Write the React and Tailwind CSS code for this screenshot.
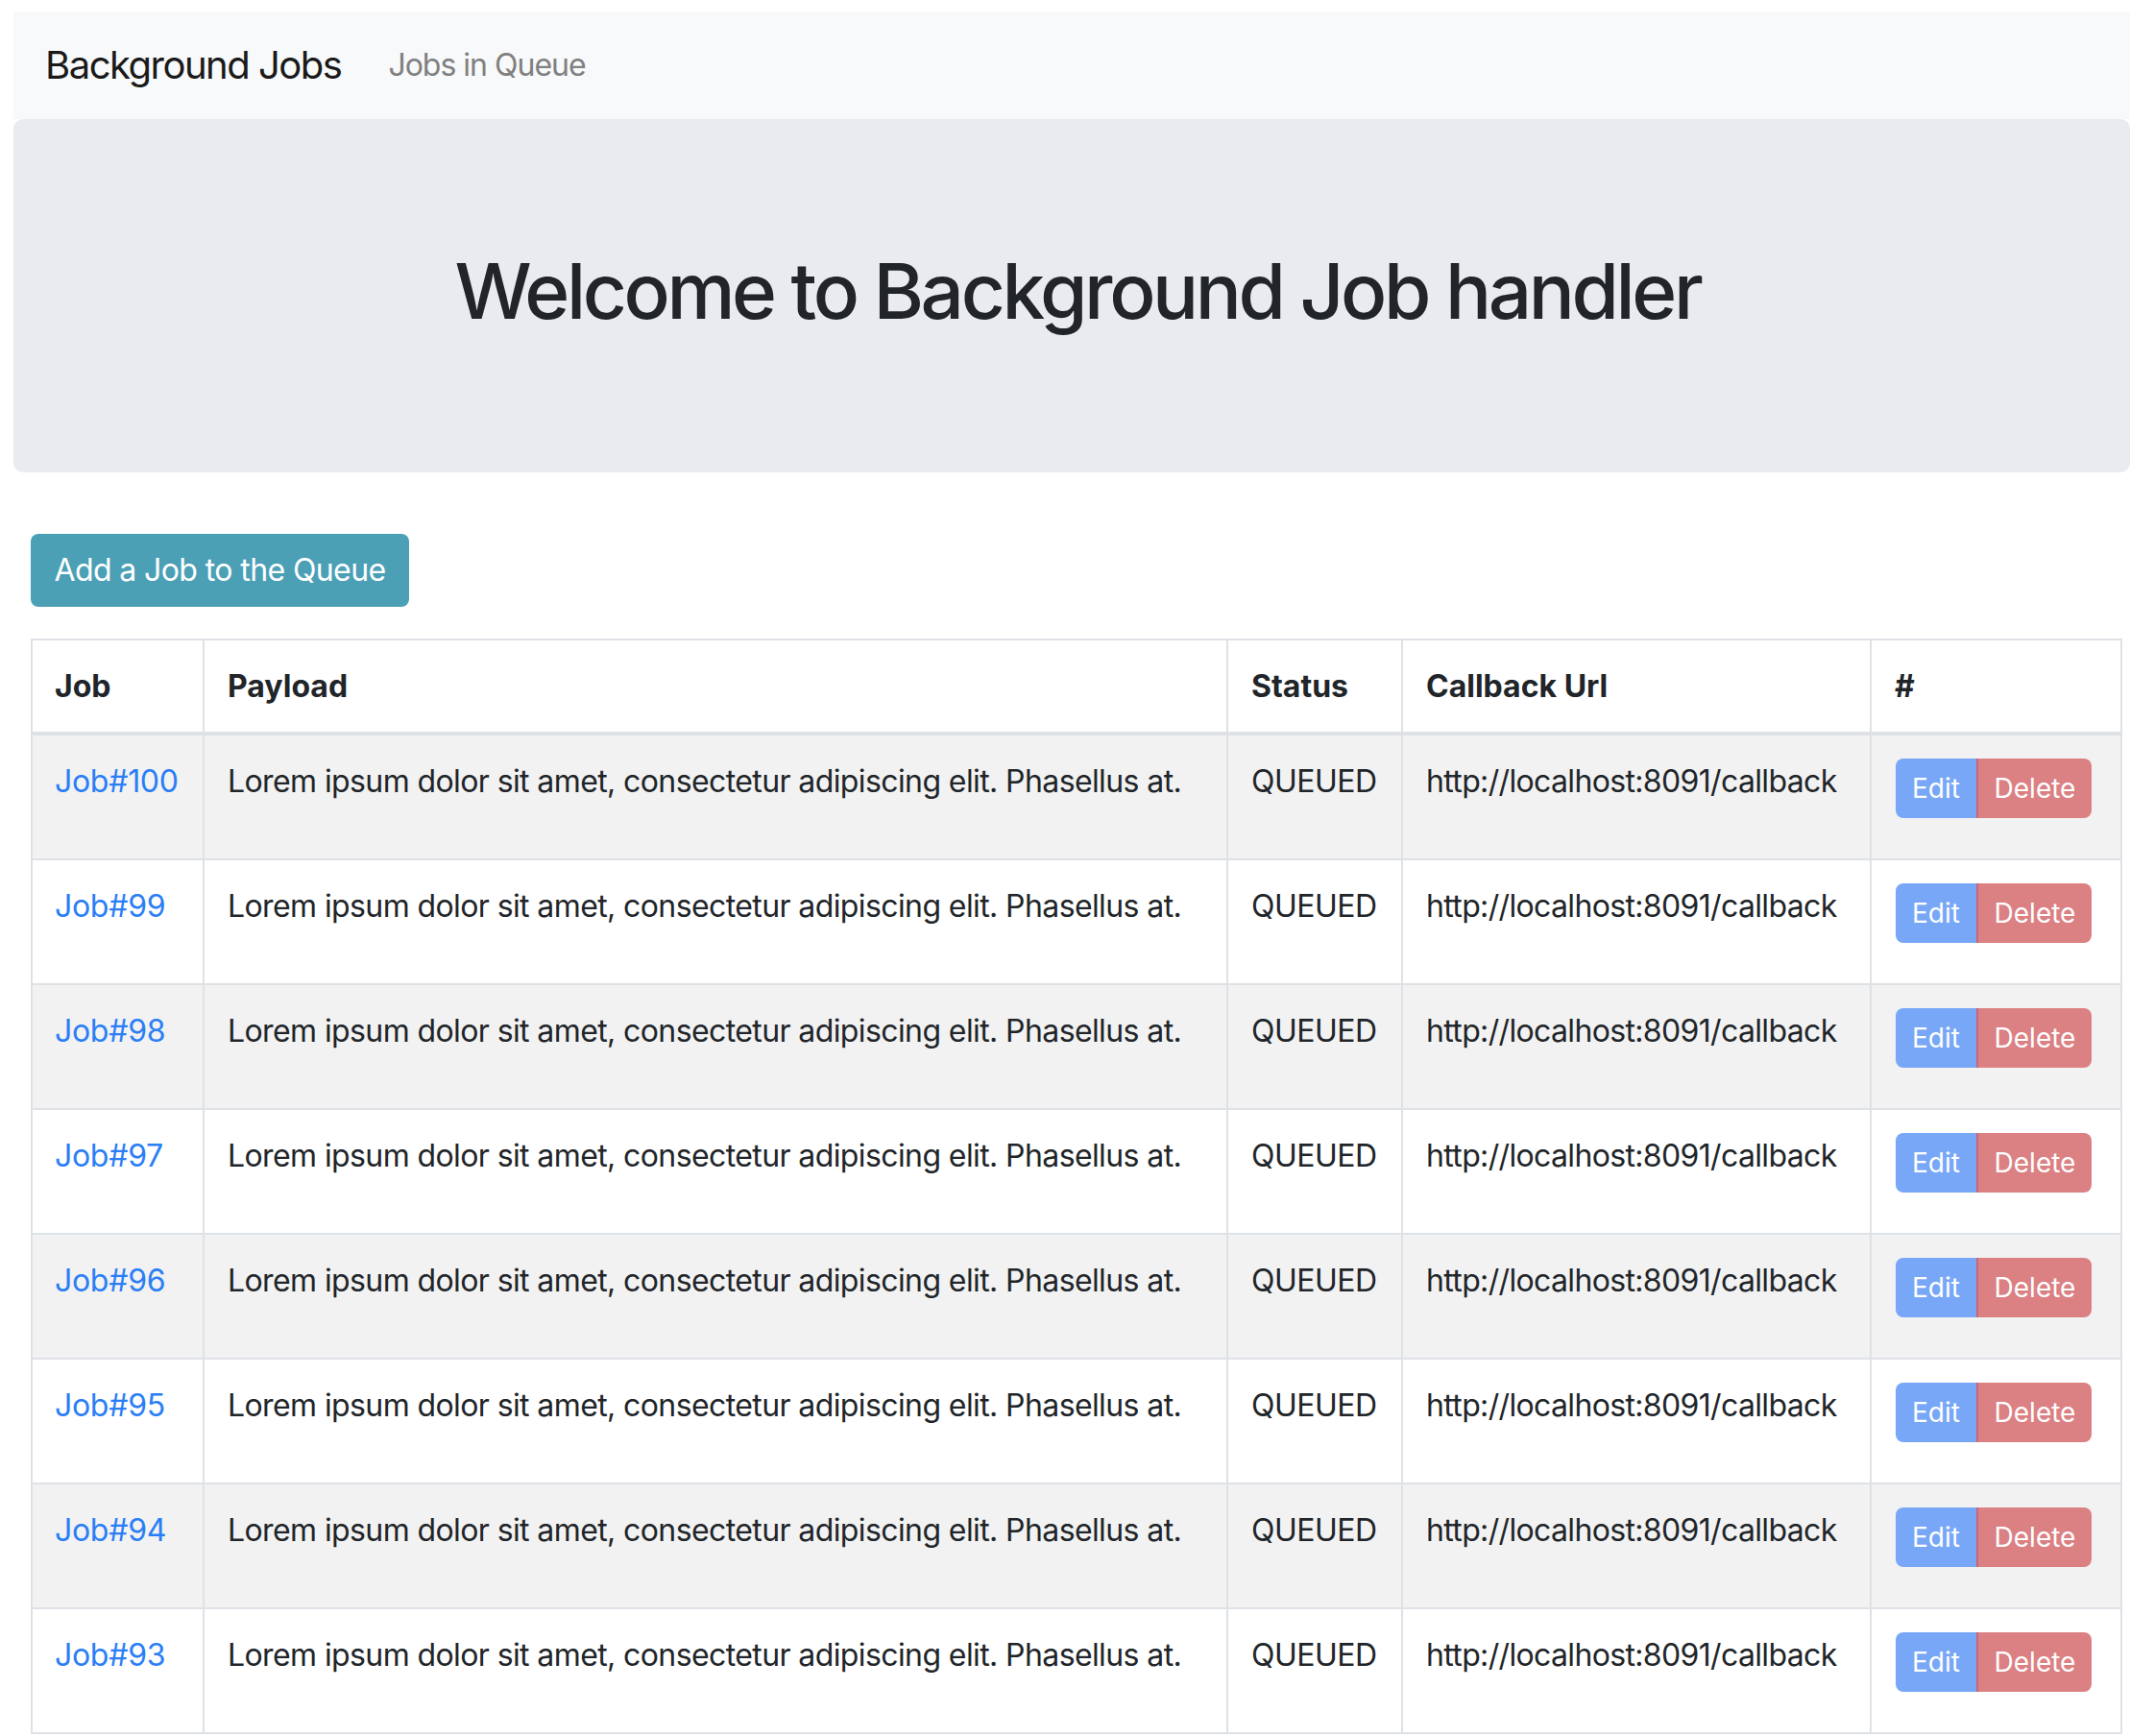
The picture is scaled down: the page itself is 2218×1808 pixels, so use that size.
import React from "react";

const FONT = { fontFamily: "Inter, 'Noto Sans', sans-serif" };

const rows = [100, 99, 98, 97, 96, 95, 94, 93];

function Row({ n, striped }) {
  return (
    <div className={`flex h-[130px] border-b-2 border-[#dee2e6] ${striped ? "bg-[#f2f2f2]" : "bg-white"}`}>
      <div className="w-[179px] shrink-0 border-r-2 border-[#dee2e6] pl-[23px] pt-[24px] text-[32px] leading-[48px] tracking-[-0.3px] text-[#2a7ef6]">
        Job#{n}
      </div>
      <div className="w-[1066px] shrink-0 border-r-2 border-[#dee2e6] pl-[24px] pt-[24px] text-[32px] leading-[48px] tracking-[-0.6px] text-[#212529] whitespace-nowrap">
        Lorem ipsum dolor sit amet, consectetur adipiscing elit. Phasellus at.
      </div>
      <div className="w-[182px] shrink-0 border-r-2 border-[#dee2e6] pl-[24px] pt-[24px] text-[32px] leading-[48px] tracking-[-0.5px] text-[#212529]">
        QUEUED
      </div>
      <div className="w-[488px] shrink-0 border-r-2 border-[#dee2e6] pl-[24px] pt-[24px] text-[32px] leading-[48px] tracking-[-0.65px] text-[#212529] whitespace-nowrap">
        http://localhost:8091/callback
      </div>
      <div className="w-[261px] shrink-0 border-r-2 border-[#dee2e6] pl-[25px] pt-[24px]">
        <div className="flex h-[62px]">
          <div className="flex w-[84px] items-center justify-center rounded-l-[8px] bg-[#77a7f6] text-[28px] text-white">
            Edit
          </div>
          <div className="flex w-[120px] items-center justify-center rounded-r-[8px] border-l-2 border-[#c4687a] bg-[#db8083] text-[28px] text-white">
            Delete
          </div>
        </div>
      </div>
    </div>
  );
}

export default function App() {
  return (
    <div className="min-h-screen w-[2218px] overflow-hidden bg-white pl-[14px] pt-[12px]" style={FONT}>
      <nav className="flex h-[112px] items-center bg-[#f8f9fa] pl-[33px]">
        <span className="text-[40px] leading-[60px] tracking-[-1.5px] text-[#1a1a1a]">Background Jobs</span>
        <span className="ml-[49px] text-[32px] leading-[48px] tracking-[-1px] text-[#808080]">Jobs in Queue</span>
      </nav>
      <div className="h-[368px] rounded-[10px] bg-[#e9ebef] pl-[12px] pt-[131px] text-center">
        <h1 className="text-[80px] font-medium leading-[96px] tracking-[-3.4px] text-[#212529]">
          Welcome to Background Job handler
        </h1>
      </div>
      <div className="pl-[18px] pt-[64px]">
        <div className="flex h-[76px] w-[394px] items-center justify-center rounded-[8px] bg-[#4ba0b6] text-[32px] tracking-[-0.6px] text-white">
          Add a Job to the Queue
        </div>
        <div className="mt-[33px] w-[2178px] border-l-2 border-t-2 border-[#dee2e6]">
          <div className="flex h-[99px] border-b-4 border-[#dee2e6] bg-white text-[32px] font-bold leading-[48px] text-[#212529]">
            <div className="w-[179px] shrink-0 border-r-2 border-[#dee2e6] pl-[23px] pt-[24px]">Job</div>
            <div className="w-[1066px] shrink-0 border-r-2 border-[#dee2e6] pl-[24px] pt-[24px]">Payload</div>
            <div className="w-[182px] shrink-0 border-r-2 border-[#dee2e6] pl-[24px] pt-[24px]">Status</div>
            <div className="w-[488px] shrink-0 border-r-2 border-[#dee2e6] pl-[24px] pt-[24px]">Callback Url</div>
            <div className="w-[261px] shrink-0 border-r-2 border-[#dee2e6] pl-[24px] pt-[24px]">#</div>
          </div>
          {rows.map((n, i) => (
            <Row key={n} n={n} striped={i % 2 === 0} />
          ))}
        </div>
      </div>
    </div>
  );
}
